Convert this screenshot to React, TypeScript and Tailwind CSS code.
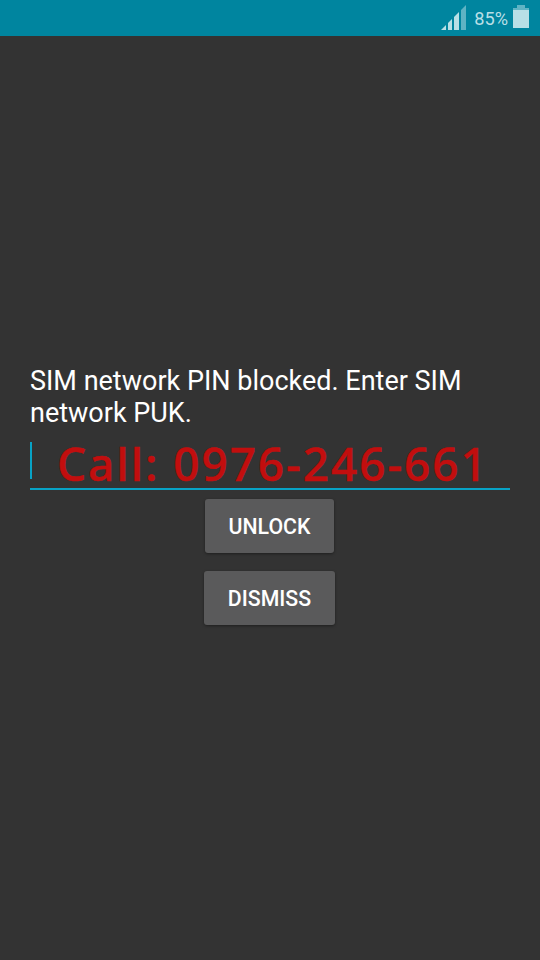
export default function App() {
  return (
    <div className="w-[540px] h-[960px] flex flex-col bg-[#333333] overflow-hidden font-['Roboto',sans-serif]">
      <div className="h-9 bg-[#00859f] flex items-center justify-end">
        <svg width="25" height="26" viewBox="0 0 25 26" className="mr-[8px] mt-[-2px]">
          <path d="M0 26 L5 21 V26Z" fill="#b8dfe6" />
          <path d="M7 19 L11 15 V26 H7Z" fill="#b8dfe6" />
          <path d="M13 13 L18 8 V26 H13Z" fill="#b8dfe6" />
          <path d="M20 6 L25 1 V26 H20Z" fill="#5fb3c4" />
        </svg>
        <span className="text-[18.2px] leading-none text-[#b8dfe6] mr-[5px] mt-[3px]">85%</span>
        <svg width="16" height="23" viewBox="0 0 16 23" className="mr-[11px] mb-[3px]">
          <path d="M0 4H16V23H0Z" fill="#b8dfe6" />
          <path d="M4 0H12V3H16V5H0V3H4Z" fill="#5fb3c4" />
        </svg>
      </div>
      <div className="pt-[329px] px-[30px] flex flex-col">
        <p className="text-[27px] leading-[32px] text-white">SIM network PIN blocked. Enter SIM network PUK.</p>
        <div className="mt-[13px] h-[48px] border-b-2 border-[#08a3c6] flex items-center relative">
          <div className="absolute left-0 top-0 w-[2px] h-[37px] bg-[#08a3c6]" />
          <span className="pl-[27px] pb-[4px] text-[46px] leading-none font-medium tracking-[1.9px] text-[#c20e0e] [-webkit-text-stroke:0.5px_#c20e0e] font-['Noto_Sans',sans-serif] whitespace-nowrap">Call: 0976-246-661</span>
        </div>
        <div className="mt-[9px] pr-[1px] flex flex-col items-center gap-[18px]">
          <button className="w-[129px] h-[54px] pt-[2px] rounded-[3px] bg-[#5a5a5b] shadow-[0_1px_3px_rgba(0,0,0,0.4)] text-white text-[21.3px] font-medium">UNLOCK</button>
          <button className="w-[131px] h-[54px] pt-[2px] rounded-[3px] bg-[#5a5a5b] shadow-[0_1px_3px_rgba(0,0,0,0.4)] text-white text-[21.3px] font-medium">DISMISS</button>
        </div>
      </div>
    </div>
  );
}
